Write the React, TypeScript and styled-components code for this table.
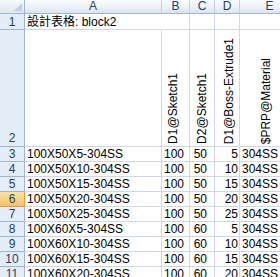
import React from 'react';
import styled, { createGlobalStyle } from 'styled-components';

const GlobalStyle = createGlobalStyle`
  html, body {
    margin: 0;
    padding: 0;
    background: #ffffff;
  }
  * {
    box-sizing: border-box;
  }
`;

const Sheet = styled.div`
  display: grid;
  grid-template-columns: 25px 137px 28px 25px 25px 60px;
  grid-template-rows: 14px 16px 117px repeat(9, 15px);
  width: 280px;
  height: 277px;
  overflow: hidden;
  font-family: "Liberation Sans", "Noto Sans CJK TC", Arial, sans-serif;
  font-size: 12px;
  color: #000;
  background: #fff;
`;

const Corner = styled.div`
  position: relative;
  background: linear-gradient(#f6f9fc, #dde6f1);
  border-right: 1px solid #9eb6ce;
  border-bottom: 1px solid #9eb6ce;

  &::after {
    content: '';
    position: absolute;
    right: 2px;
    bottom: 2px;
    border-style: solid;
    border-width: 0 0 8px 8px;
    border-color: transparent transparent #c3d0e0 transparent;
  }
`;

const ColHeader = styled.div`
  display: flex;
  align-items: center;
  justify-content: center;
  background: linear-gradient(#f9fbfd 0%, #eef3f9 50%, #dbe4f0 100%);
  border-right: 1px solid #c3d0e2;
  border-bottom: 1px solid #9eb6ce;
  color: #27415f;
  line-height: 13px;
`;

const RowHeader = styled.div<{ $active?: boolean; $tall?: boolean }>`
  display: flex;
  align-items: ${(p) => (p.$tall ? 'flex-end' : 'center')};
  justify-content: center;
  padding-bottom: ${(p) => (p.$tall ? '1px' : '0')};
  background: ${(p) => (p.$active ? 'linear-gradient(#fbe1a6, #f5c36b)' : '#e4ecf7')};
  border-right: 1px solid ${(p) => (p.$active ? '#f29536' : '#9eb6ce')};
  border-bottom: 1px solid ${(p) => (p.$active ? '#f29536' : '#9eb6ce')};
  color: #27415f;
  line-height: 14px;
`;

const Cell = styled.div<{ $align?: 'left' | 'right'; $padR?: number }>`
  display: flex;
  align-items: flex-end;
  justify-content: ${(p) => (p.$align === 'right' ? 'flex-end' : 'flex-start')};
  padding: 0 ${(p) => p.$padR ?? 1}px 0 2px;
  border-right: 1px solid #d0d7e5;
  border-bottom: 1px solid #d0d7e5;
  white-space: nowrap;
  line-height: 14px;
  overflow: visible;
`;

const OverflowCell = styled(Cell)`
  border-right-color: transparent;
  position: relative;
  z-index: 1;
`;

const RotatedCell = styled.div<{ $padL: number }>`
  display: flex;
  align-items: flex-end;
  padding: 0 0 2px ${(p) => p.$padL}px;
  border-right: 1px solid #d0d7e5;
  border-bottom: 1px solid #d0d7e5;
`;

const RotatedText = styled.span`
  writing-mode: vertical-rl;
  transform: rotate(180deg);
  white-space: nowrap;
  line-height: 14px;
`;

const columns = ['A', 'B', 'C', 'D', 'E'];

const headers = [
  { text: 'D1@Sketch1', padL: 4 },
  { text: 'D2@Sketch1', padL: 5 },
  { text: 'D1@Boss-Extrude1', padL: 7 },
  { text: '$PRP@Material', padL: 19 },
];

const rows = [
  ['100X50X5-304SS', 100, 50, 5, '304SS'],
  ['100X50X10-304SS', 100, 50, 10, '304SS'],
  ['100X50X15-304SS', 100, 50, 15, '304SS'],
  ['100X50X20-304SS', 100, 50, 20, '304SS'],
  ['100X50X25-304SS', 100, 50, 25, '304SS'],
  ['100X60X5-304SS', 100, 60, 5, '304SS'],
  ['100X60X10-304SS', 100, 60, 10, '304SS'],
  ['100X60X15-304SS', 100, 60, 15, '304SS'],
  ['100X60X20-304SS', 100, 60, 20, '304SS'],
];

export default function App() {
  return (
    <>
      <GlobalStyle />
      <Sheet>
        <Corner />
        {columns.map((c) => (
          <ColHeader key={c}>{c}</ColHeader>
        ))}

        <RowHeader>1</RowHeader>
        <OverflowCell>設計表格: block2</OverflowCell>
        <Cell />
        <Cell />
        <Cell />
        <Cell />

        <RowHeader $tall>2</RowHeader>
        <Cell />
        {headers.map((h) => (
          <RotatedCell key={h.text} $padL={h.padL}>
            <RotatedText>{h.text}</RotatedText>
          </RotatedCell>
        ))}

        {rows.map((r, i) => (
          <React.Fragment key={i}>
            <RowHeader $active={i + 3 === 6}>{i + 3}</RowHeader>
            <Cell>{r[0]}</Cell>
            <Cell $align="right" $padR={5}>{r[1]}</Cell>
            <Cell $align="right" $padR={7}>{r[2]}</Cell>
            <Cell $align="right" $padR={1}>{r[3]}</Cell>
            <Cell>{r[4]}</Cell>
          </React.Fragment>
        ))}
      </Sheet>
    </>
  );
}
